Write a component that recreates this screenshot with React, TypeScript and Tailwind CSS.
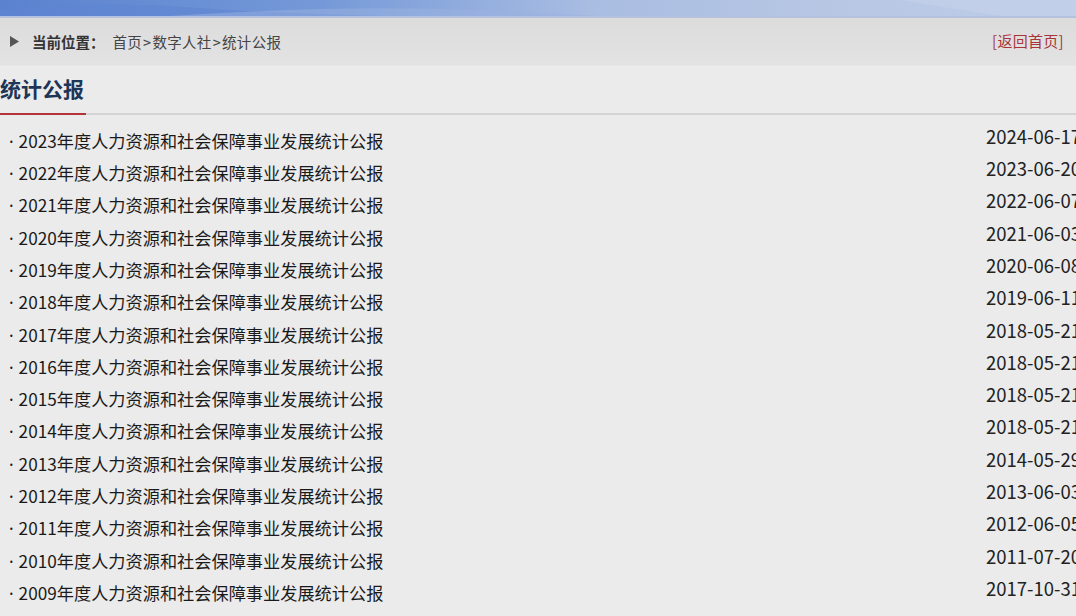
import React from "react";

const rows: [string, string][] = [
  ["2023", "2024-06-17"],
  ["2022", "2023-06-20"],
  ["2021", "2022-06-07"],
  ["2020", "2021-06-03"],
  ["2019", "2020-06-08"],
  ["2018", "2019-06-11"],
  ["2017", "2018-05-21"],
  ["2016", "2018-05-21"],
  ["2015", "2018-05-21"],
  ["2014", "2018-05-21"],
  ["2013", "2014-05-29"],
  ["2012", "2013-06-03"],
  ["2011", "2012-06-05"],
  ["2010", "2011-07-20"],
  ["2009", "2017-10-31"],
];

export default function App() {
  return (
    <div
      className="w-[1076px] h-[616px] overflow-hidden bg-[#ebebeb] text-[#222]"
      style={{ fontFamily: '"Noto Sans CJK SC", "Noto Sans", sans-serif' }}
    >
      {/* top banner */}
      <div className="relative h-[18px] bg-[linear-gradient(90deg,#5a82cf_0%,#7599d8_30%,#a9bde2_55%,#b9c8e4_80%,#bccbe6_100%)] overflow-hidden">
        <svg className="absolute inset-0" width="1076" height="18" viewBox="0 0 1076 18" preserveAspectRatio="none">
          <path d="M0 10 C 60 4, 120 2, 200 8 S 380 16, 460 18 L 0 18 Z" fill="#5f86d2" opacity="0.6" />
          <path d="M140 18 C 260 10, 380 4, 520 12 S 700 18, 760 18 Z" fill="#9ab1df" opacity="0.5" />
          <path d="M900 0 C 940 6, 980 14, 1020 18 L 1076 18 L 1076 0 Z" fill="#c5d2ea" opacity="0.6" />
        </svg>
        <div className="absolute bottom-0 left-0 right-0 h-[2px] bg-[#b4c2de]" />
      </div>

      {/* breadcrumb bar */}
      <div className="h-[48px] flex items-center justify-between bg-[linear-gradient(180deg,#dcdcdc_0%,#e0e0e0_60%,#e3e3e3_100%)] border-b border-[#e6e6e6]">
        <div className="flex items-center text-[14.5px]">
          <svg className="ml-[10px]" width="9" height="11" viewBox="0 0 9 11">
            <path d="M0 0 L9 5.5 L0 11 Z" fill="#555" />
          </svg>
          <span className="ml-[13px] font-bold text-[#333]">当前位置：</span>
          <span className="ml-[8px] text-[#444] tracking-[0.3px]">首页<span className="px-[1px]">&gt;</span>数字人社<span className="px-[1px]">&gt;</span>统计公报</span>
        </div>
        <span className="mr-[12px] text-[15px] text-[#a8343a] tracking-[0.3px]">[返回首页]</span>
      </div>

      {/* title */}
      <div className="relative h-[49px] flex items-start">
        <div className="h-[44px] flex items-center">
          <span className="text-[21px] font-bold text-[#1d3557] leading-none">统计公报</span>
        </div>
        <div className="absolute left-0 right-0 bottom-0 h-[2px] bg-[#d4d4d4]" />
        <div className="absolute left-0 bottom-0 w-[86px] h-[2px] bg-[#b2343a]" />
      </div>

      {/* list */}
      <div className="pt-[10px] w-[1100px]">
        {rows.map(([y, d]) => (
          <div key={y} className="h-[32.3px] flex items-center justify-between">
            <span className="text-[17.2px] text-[#1a1a1a] whitespace-nowrap">
              <span className="ml-[9px] mr-[5px]" style={{ fontFamily: '"Noto Sans", sans-serif' }}>·</span>
              {y}年度人力资源和社会保障事业发展统计公报
            </span>
            <span className="w-[114px] pb-[9px] text-[18.5px] text-[#222] whitespace-nowrap">{d}</span>
          </div>
        ))}
      </div>
    </div>
  );
}
